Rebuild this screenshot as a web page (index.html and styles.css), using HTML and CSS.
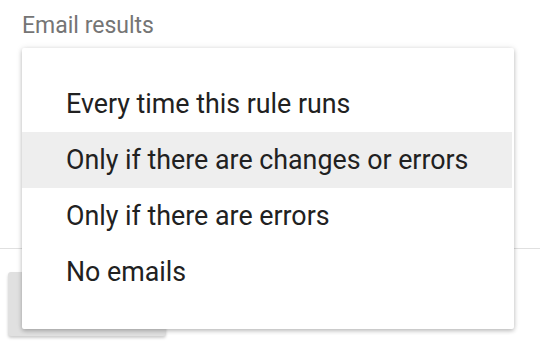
FILE: index.html
```html
<!DOCTYPE html>
<html>
<head>
<meta charset="utf-8">
<link rel="stylesheet" href="styles.css">
</head>
<body>
<div class="page">
  <div class="label">Email results</div>
  <div class="field"></div>
  <div class="actions"><div class="btn"></div></div>
  <div class="menu">
    <div class="item">Every time this rule runs</div>
    <div class="item selected">Only if there are changes or errors</div>
    <div class="item">Only if there are errors</div>
    <div class="item">No emails</div>
  </div>
</div>
</body>
</html>
```
FILE: styles.css
```css
html, body {
  margin: 0;
  padding: 0;
  background: #ffffff;
  font-family: Roboto, "Liberation Sans", sans-serif;
}
.page {
  position: relative;
  width: 540px;
  height: 352px;
  overflow: hidden;
}
.label {
  padding: 12px 0 0 22px;
  height: 28px;
  font-size: 23px;
  line-height: 28px;
  color: #757575;
}
.field {
  height: 208px;
  border-bottom: 1px solid #e0e0e0;
}
.actions {
  padding: 23px 0 0 8px;
}
.btn {
  width: 158px;
  height: 64px;
  background: #e0e0e0;
  border-radius: 3px;
  box-shadow: 0 2px 3px rgba(0,0,0,0.2);
}
.menu {
  position: absolute;
  left: 22px;
  top: 48px;
  width: 492px;
  padding: 28px 0 29px;
  box-sizing: border-box;
  height: 281px;
  background: #ffffff;
  border-radius: 2px;
  box-shadow: 0 2px 4px rgba(0,0,0,0.22), 0 0 6px rgba(0,0,0,0.1);
}
.item {
  height: 56px;
  margin-right: 2px;
  padding-left: 44px;
  font-size: 26.8px;
  line-height: 56px;
  color: #212121;
  white-space: nowrap;
}
.item.selected {
  background: #eeeeee;
}
```
